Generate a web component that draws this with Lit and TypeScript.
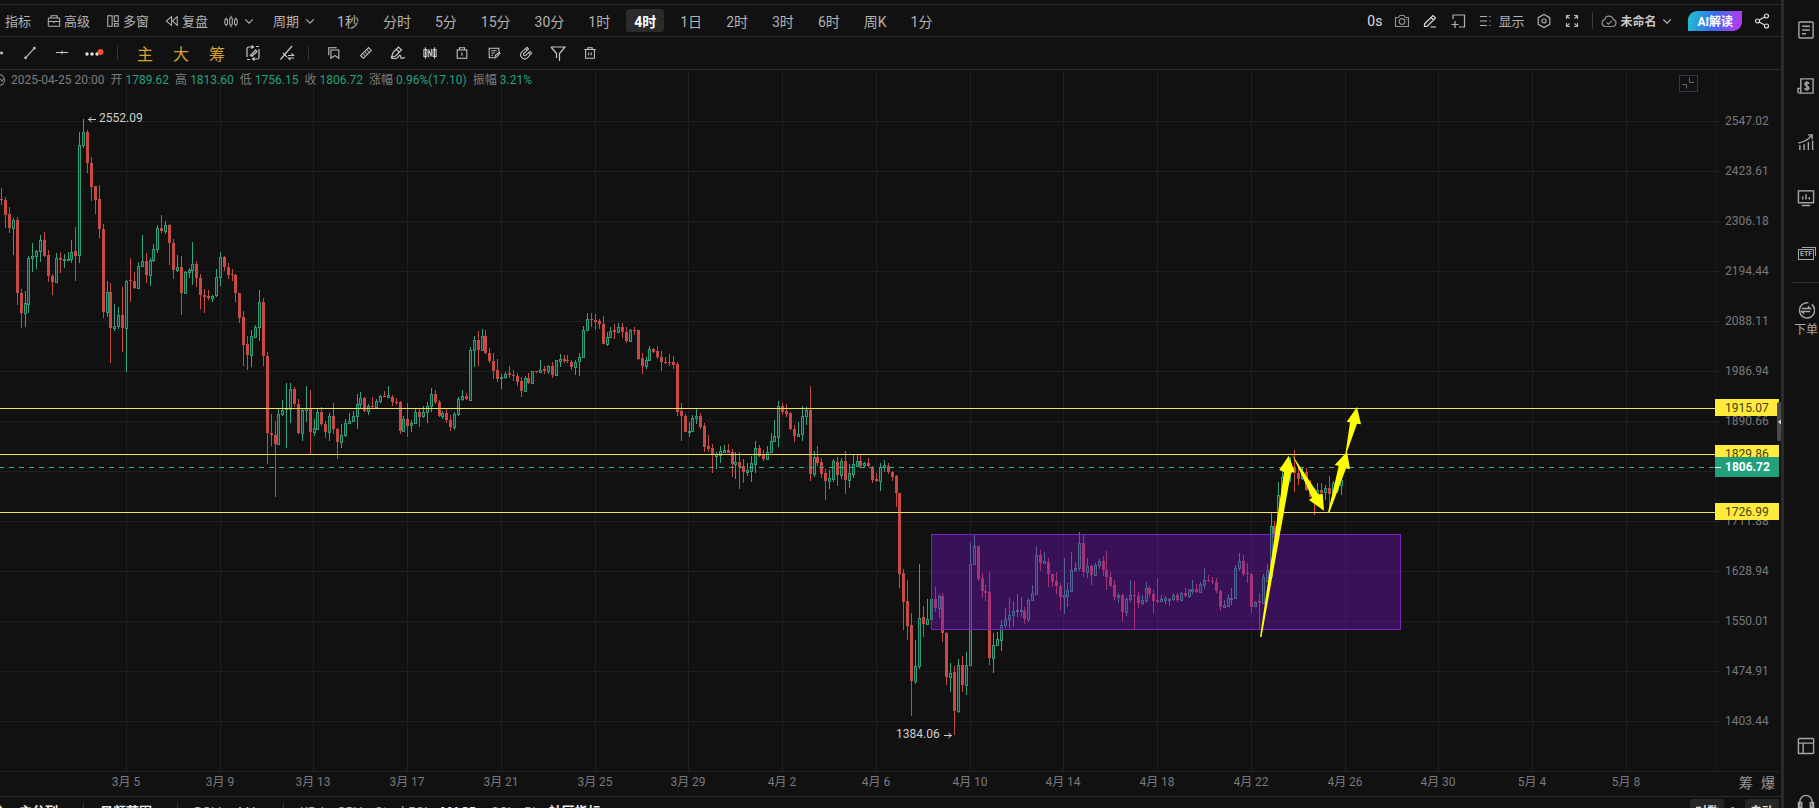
import { LitElement, html, svg, css, nothing } from "lit";
import { customElement, state } from "lit/decorators.js";
import { classMap } from "lit/directives/class-map.js";

/* ---------- candle series ----------
   Each entry: direction (r = down, g = up) then high, body top, body bottom, low.
   Readings are thirds of a pixel measured down from the block's base. */
const blocks: { base: number; rows: string }[] = [
  {
    base: 30,
    rows: `r265,297,301,315 r290,300,345,383 r321,343,383,398 g354,361,383,465 r352,361,580,614 r566,580,638,684 g572,610,638,680 g467,475,611,640
g429,467,475,515 g450,454,467,507 g404,420,454,487 r396,420,467,471 r451,465,529,545 r521,529,545,586 g458,475,545,549 r457,475,481,519
g463,477,481,503 g457,477,480,480 g421,455,478,489 r381,454,467,544 g97,136,466,489 g57,97,136,143 r90,97,190,219 r170,190,260,302
r258,259,299,341 r256,297,387,415 r373,387,635,653 g543,577,635,650 r549,577,683,789 g612,677,683,692 g620,646,677,688 r562,646,683,755
g541,544,683,815 r475,541,544,607 r515,542,563,567 g486,498,563,565 g405,484,498,500 r459,484,526,548 g473,481,526,559 g433,448,481,487
g375,384,448,459 r344,384,392,400 g363,376,392,401 r372,375,430,494 r417,430,509,538 g465,501,509,515 r468,502,578,644 g512,517,578,582
g504,510,517,534 g426,493,511,554 r484,492,535,560 r523,535,586,627 r568,585,592,638 r570,588,594,600 g584,588,594,607 g506,532,586,590
g457,472,532,559 r469,472,502,513 r489,500,525,537 r507,522,526,544 r523,526,580,606 r578,580,653,669 r632,651,734,798 r709,732,765,809
g689,709,765,800 g675,681,711,714 g570,606,681,722 r594,607,769,798 r755,769,998,1093 r942,998,1006,1039 r963,1006,1032,1190
g926,942,1032,1036 g901,930,942,948 g849,924,928,1045 g849,867,927,969 r861,867,913,920`,
  },
  {
    base: 200,
    rows: `r387,403,490,492 g415,421,490,514 g349,413,421,457 r360,413,487,551 g447,475,487,498 g417,427,477,479 r411,427,462,469 r452,461,487,504
g430,438,487,513 r400,438,478,492 r473,477,517,566 g463,496,517,535 g446,458,496,500 g430,452,459,461 g424,437,452,455 g373,402,437,478
g366,384,402,415 r382,385,422,427 g402,408,422,434 r381,408,412,418 g388,392,412,414 g376,379,393,398 r362,377,380,381 g348,376,380,382
r374,382,397,409 r385,396,398,404 r394,397,482,492 g438,448,482,484 r400,447,467,502 g451,459,466,486 g416,425,460,462 r418,425,440,470
g408,425,439,443 g397,409,425,458 g355,373,409,427 r361,373,396,403 r389,396,438,441 g424,430,438,447 r415,429,450,459 r434,449,470,482
g426,433,470,480 g381,387,433,437 g360,378,387,394 r370,378,387,389 g232,241,389,390 g199,211,241,291 r184,211,241,288 g178,199,241,243
r181,199,250,252 r234,250,274,278 r249,273,302,327 r267,300,326,336 g313,322,325,357 g306,311,322,326 r289,310,316,324 r299,315,318,333
r308,317,335,347 r322,334,363,380 g318,325,362,365 r308,325,338,341 g302,304,338,340 r302,304,307,309 g271,299,307,309 r289,298,303,311
g284,289,303,312 r276,289,314,323 g270,271,314,317 g253,268,272,292 r254,267,272,280 r255,269,274,280 r271,275,291,300 g269,276,290,314
g249,262,274,317 g167,181,262,265 g130,147,181,183 r130,147,151,172 r133,149,155,181 r146,153,163,178 r138,162,221,222 g186,202,221,228
g170,183,202,204 r162,180,187,206 g160,171,185,188 r160,171,187,205 r170,187,212,218 g178,180,212,213 r172,179,183,196 r179,181,266,271
r250,264,287,311 g262,271,287,297 g228,238,271,272 r234,238,246,250 r228,244,262,266 r243,260,276,303 r260,275,278,283 r252,276,279,288
r258,277,284,296 r277,283,425,438`,
  },
  {
    base: 230,
    rows: `r309,334,348,422 r343,347,395,397 g367,392,396,410 g345,354,392,394 g326,349,355,371 r340,349,380,386 r368,379,440,456 r406,439,446,455
r431,445,466,518 g456,463,467,506 g438,454,464,490 g435,451,455,458 r432,449,458,460 r448,457,491,530 g455,487,492,536 r455,487,501,568
r476,499,515,550 g488,510,515,527 g468,490,514,547 g422,443,491,520 r434,443,467,472 r451,465,476,482 g438,455,476,480 g400,424,457,458
g360,409,424,426 g303,319,410,441 r308,319,336,344 r311,334,341,352 r336,339,388,390 r375,388,407,427 g366,402,407,408 g318,347,402,423
g322,330,347,376 r258,330,521,542 g454,471,521,530 r437,471,488,497 r475,487,521,533 r508,520,542,600 g511,535,542,567 g476,484,536,545
r470,485,524,558 g475,484,524,537 r452,484,540,582 g492,520,540,565 g465,493,521,535 g465,484,497,500 r464,484,497,501 g486,490,496,503
r474,488,499,501 r498,500,541,548 r519,538,543,545 g490,500,542,574 g481,495,502,516 r490,497,517,521 r514,516,530,543 r525,527,580,621
r578,580,821,864 r808,820,905,991 r840,903,977,1021 r940,975,1144,1247 g1020,1099,1144,1152 g792,953,1098,1107 r918,952,973,1011
g896,957,973,975`,
  },
  {
    base: 380,
    rows: `g447,448,508,510 r411,448,475,486 g433,438,475,503 r430,438,550,576 r546,549,681,705 g640,668,681,726 r647,667,782,855 g627,646,782,789
r618,646,704,726 g607,644,704,735 g279,343,644,648 g255,289,343,345 r287,289,386,392 r368,385,422,443 r404,422,428,452 r366,427,624,645
g549,584,624,669 g547,568,586,588 g510,524,569,603 g474,507,524,534 g444,496,507,535 g454,483,496,532 g432,479,484,500 g440,479,482,500
r472,482,507,522 g445,450,507,516 g404,430,450,453 g288,315,433,434 r300,315,338,362 g307,332,338,341 r324,336,373,410 r372,373,395,410
r365,394,409,433 r398,408,442,480 g324,436,442,491 g398,421,437,471 g307,361,422,425 g337,353,361,366 g247,280,353,363 r254,280,367,382
g324,349,367,385 r346,349,374,405 g338,346,374,376 g327,334,346,356 r319,334,360,378 r304,359,380,421 r365,380,407,412 r391,406,440,450
g430,435,441,460 r433,436,487,512 g442,448,487,497 g390,436,448,457 r394,436,439,537 r425,438,460,473 g436,449,460,466 g397,415,449,460
r409,415,431,440 r420,431,453,489 r385,451,455,459 g434,448,453,456 g437,445,450,461 g444,447,450,467 g430,436,447,453 r428,436,451,457
g425,430,451,453 r415,430,437,440 g416,421,438,444 g391,417,422,432 r402,417,425,430 g395,403,425,426 g355,390,405,417 r375,390,394,396
r381,392,397,402 r384,396,424,430 r420,424,470,482 g450,466,470,470 g433,445,469,470 g414,443,447,466 g346,353,443,444 g308,334,353,362
r315,334,371,378 r338,370,373,400 r368,373,470,489 g454,457,469,472 r430,454,458,541 g372,381,458,461 g343,360,392,392 g189,229,382,385
r212,229,260,290`,
  },
  {
    base: 310,
    rows: `g306,345,440,450 g260,290,345,350 g240,262,290,300 g230,250,280,305 r210,262,280,335 r258,280,297,315 g262,275,295,300 r265,276,330,332
r300,328,350,352 r325,345,362,405 g309,330,362,365 r310,330,338,345 g314,324,337,359 r288,323,342,385 g304,310,338,345 g290,305,330,340
g270,300,315,345`,
  },
];

const STEP = 3.906;
const FIRST_X = 1.6;
const DAY_STEP = STEP * 24;
const FIRST_DAY_X = 126;

const paths = { upWick: "", upBody: "", downWick: "", downBody: "" };
let index = 0;
for (const block of blocks) {
  for (const row of block.rows.split(/\s+/)) {
    const [high, top, bottom, low] = row.slice(1).split(",").map((n) => Math.round(block.base + Number(n) / 3));
    const x = Math.floor(FIRST_X + STEP * index);
    const h = Math.max(1, bottom - top);
    if (row[0] === "r") {
      paths.downWick += `M${x + 0.5} ${high}V${low}`;
      paths.downBody += `M${x - 1} ${top}h3v${h}h-3z`;
    } else {
      paths.upWick += `M${x + 0.5} ${high}V${top}M${x + 0.5} ${top + h}V${low}`;
      paths.upBody += `M${x - 0.5} ${top + 0.5}h2v${h}h-2z`;
    }
    index++;
  }
}

const priceTicks = ["2547.02", "2423.61", "2306.18", "2194.44", "2088.11", "1986.94", "1890.66", "", "1711.88", "1628.94", "1550.01", "1474.91", "1403.44"];
const tickY = (i: number) => 51 + i * 50;
const levels = [
  { price: "1915.07", y: 338 },
  { price: "1829.86", y: 384 },
  { price: "1726.99", y: 442 },
];
const LAST_Y = 397;
const days = ["3月 5", "3月 9", "3月 13", "3月 17", "3月 21", "3月 25", "3月 29", "4月 2", "4月 6", "4月 10", "4月 14", "4月 18", "4月 22", "4月 26", "4月 30", "5月 4", "5月 8"];
const dayX = (i: number) => Math.round(FIRST_DAY_X + i * DAY_STEP);

const arrows = [
  "1260,567 1284,402 1279.3,400 1288.7,385.7 1294.7,402 1291,402.5 1261.5,567",
  "1292.3,385 1318.5,424.5 1322.7,423.7 1324,440.7 1309,430 1312,427.5",
  "1328,442.3 1338.7,396 1334.7,395 1347,381.7 1350,399 1346,398.5 1329.5,442.3",
  "1345.5,383.3 1350,352.5 1346.7,351.7 1357,337 1361,354.3 1357,353.7 1346.5,383.3",
];

/* ---------- icons ---------- */
const glyphs = {
  panel: svg`<path d="M2 2h11v12H2z"/><path d="M5 11V8M8 11V5M10.500 11V7"/>`,
  box: svg`<rect x="1.500" y="4.500" width="13" height="9.500" rx="1"/><path d="M4.500 4.500V2h7v2.500M1.500 8.500h13M8 8.500v2"/>`,
  windows: svg`<rect x="2" y="2" width="5" height="12"/><rect x="9.500" y="2" width="4.500" height="6.500"/><rect x="9.500" y="11" width="4.500" height="3"/>`,
  rewind: svg`<path d="M7.500 3v10L1.500 8zM14 3v10L8.500 8z"/>`,
  candles: svg`<rect x="1" y="6" width="3" height="6" rx="1"/><rect x="6.500" y="4.500" width="3" height="8" rx="1"/><rect x="12" y="6" width="3" height="6" rx="1"/><path d="M2.500 4v2M2.500 12v2M8 2v2.500M8 12.500V15M13.500 4v2M13.500 12v2"/>`,
  chevron: svg`<path d="M2 5.500L8 11.500 14 5.500" stroke-width="1.800"/>`,
  camera: svg`<path d="M1.500 4.500h3L6 2.500h4l1.500 2h3V13.500h-13z"/><circle cx="8" cy="8.500" r="2.800"/><path d="M12 6.500h1"/>`,
  pen: svg`<path d="M2.500 11L11 2.500l2.500 2.500L5 13.500H2.500zM9 4.500L11.500 7M8.500 14H14"/>`,
  addFrame: svg`<path d="M3 6V2h11.500v12H9M5 8v7M1.500 11.500h7"/>`,
  list: svg`<path d="M2 3.500h7M2 8h7M2 12.500h7"/><path d="M11.500 3.500h2M11.500 8h2M11.500 12.500h2" stroke-dasharray="1.200 .8"/>`,
  hex: svg`<path d="M8 1.500l5.800 3.200v6.600L8 14.500l-5.800-3.200V4.700z"/><circle cx="8" cy="8" r="2"/>`,
  expand: svg`<path d="M2.500 6V2.500H6M2.500 2.500l3 3M10 2.500h3.500V6M13.500 2.500l-3 3M2.500 10v3.500H6M2.500 13.500l3-3M10 13.500h3.500V10M13.500 13.500l-3-3"/>`,
  cloud: svg`<path d="M4.500 13.500a3.500 3.500 0 0 1-.7-6.900 4.400 4.400 0 0 1 8.500-.3 3.700 3.700 0 0 1-.4 7.200zM5.700 9.500l1.800 1.700 3.200-3.400"/>`,
  share: svg`<circle cx="3.500" cy="8" r="2"/><circle cx="12.500" cy="3" r="2"/><circle cx="12.500" cy="13" r="2"/><path d="M5.200 7l5.500-3M5.200 9l5.500 3"/>`,
  ray: svg`<path d="M0 8h14"/><circle cx="12" cy="8" r="1"/>`,
  segment: svg`<path d="M3 13.500L13 2.500"/><circle cx="3" cy="13.500" r="1"/><circle cx="13" cy="2.500" r="1"/>`,
  hline: svg`<path d="M1 7.500h14M8 5.500v4"/>`,
  loopEdit: svg`<path d="M2 12V3.500Q2 2 3.500 2H8M14 4v8.500Q14 14 12.500 14H8M6.500.500L8.500 2 6.500 3.500M9.500 12.500L7.500 14l2 1.500M5.500 10.500l5-5.500 1.500 1.500-5 4.700zM11 1.500h3M2 14.500h3"/>`,
  trendSwap: svg`<path d="M1.500 14.500L13 1M4 8l4 4M9 10.500h5.500l-2-2M15 13H9.500l2 2"/>`,
  bookmark: svg`<path d="M4.500 4.500h9V14l-4.500-3-4.500 3zM2 10.500V2h9"/>`,
  ruler: svg`<path d="M1.800 11L11 1.800 14 5 5 14zM5 9.500l1.500 1.500M7.200 7.200l1.500 1.500M9.500 5l1.500 1.500"/>`,
  brush: svg`<path d="M1.500 12.500l1.500-5L8.500 2l3 3-6 6zM6.500 4.500L9.500 7.500M1.500 13.500H6c2 0 3-4 4.300-3s-.3 3 1.200 3 1.700-1.500 3.500-.5"/>`,
  bars: svg`<rect x="1" y="4" width="3.500" height="8"/><rect x="11.500" y="4" width="3.500" height="8"/><path d="M2.800 1.500v13M13.200 1.500v13M6.500 13V4l3 8V3"/>`,
  lock: svg`<rect x="2.500" y="4.500" width="11" height="9.500"/><path d="M5 4.500V2h6v2.500M8 7.500v3.500"/>`,
  note: svg`<path d="M13.500 6V2.500h-11v11H8M5 5.500h6M5 8h4M5 10.500h2M9 13.500l.5-2.500L14 7l1 1.200-4 4.500z"/>`,
  magnet: svg`<path d="M9 1.500L3.200 7a4.600 4.600 0 0 0 6.500 6.500L14.500 8l-2-2-4.800 5a1.700 1.700 0 0 1-2.300-2.300L11 3.500zM7.500 3l2 2M11 7.500l2 2"/>`,
  funnel: svg`<path d="M1 2h14L9.500 8.500V16M1 2l5.500 6.500V13"/>`,
  trash: svg`<path d="M1.500 4h13M5.500 4V2h5v2M3 4v10h10V4M6.500 7.500v3M9.500 7.500v3"/>`,
};
type GlyphName = keyof typeof glyphs;
const icon = (name: GlyphName, cls = "") => html`<svg class="ico ${cls}" viewBox="0 0 16 16" aria-hidden="true">${glyphs[name]}</svg>`;

const railGlyphs = {
  doc: svg`<rect x="2" y="1" width="15" height="17" rx="1"/><path d="M5.500 5.500h8M5.500 9.500h8M5.500 13.500h4"/>`,
  money: svg`<path d="M4 2h13v15H2.500a1.500 1.500 0 0 1-1.500-1.500V12h3zM4 12v3.500a1.500 1.500 0 0 1-1.500 1.500"/><path d="M12.500 7.500c0-2.200-4.200-2.200-4.200 0s4.200 1.800 4.200 4-4.200 2.200-4.200 0M10.400 4.500v10"/>`,
  growth: svg`<path d="M3 18v-5M7.500 18v-6M12 18V9.500M16.500 18V8M1.500 10.500C8 9.500 12 7 15.500 2.500M11.500 2h4.500v4.500"/>`,
  monitor: svg`<rect x="1.500" y="2" width="16" height="12.500"/><path d="M6 11V8M9.500 11V5.500M13 11V8.500M5 17.500h9"/>`,
  swap: svg`<path d="M15.500 3.500A8 8 0 1 1 12 2M5 8h9l-2.500-2.500M14 11H5l2.500 2.500"/>`,
  layout: svg`<rect x="1.500" y="1.500" width="16" height="16" rx="1"/><path d="M1.500 6.500h16M6.500 6.500v11"/>`,
  headset: svg`<path d="M3 15.500V9a6.500 6.500 0 0 1 13 0v6.500M3 10H1.500v5H5v-5H3M16 10h1.500v5H14v-5h2"/>`,
};
const railIcon = (name: keyof typeof railGlyphs) => html`<svg class="rail-ico" viewBox="0 0 19 19" aria-hidden="true">${railGlyphs[name]}</svg>`;

const reset = css`
  button {
    all: unset;
    box-sizing: border-box;
    cursor: pointer;
    display: flex;
    align-items: center;
    white-space: nowrap;
  }
  .ico {
    width: 16px;
    height: 16px;
    flex: none;
    fill: none;
    stroke: currentColor;
    stroke-width: 1.2;
  }
`;

@customElement("top-bar")
class TopBar extends LitElement {
  @state() private period = "4时";

  static styles = [
    reset,
    css`
      :host { display: flex; align-items: center; justify-content: space-between; height: 31px; border-top: 1px solid #2c2c2c; border-bottom: 1px solid #2c2c2c; font-size: 14px; color: #b2b2b2; overflow: hidden; }
      .group { display: flex; align-items: center; }
      .tools { gap: 16px; margin-left: -12px; font-size: 13px; }
      .tools button { gap: 3px; }
      .tools .ico { width: 14px; height: 14px; }
      .tools .menu { padding-right: 3px; }
      .ico.small { width: 10px; height: 10px; margin-left: 3px; }
      .tools .ico.small { width: 10px; height: 10px; }
      .periods { gap: 8px; margin-left: 11px; }
      .period { padding: 0 8px; height: 23px; border-radius: 3px; }
      .active { background: #2b2b2b; color: #fff; font-weight: 700; }
      .right { gap: 12px; padding-right: 11px; }
      .show { gap: 4px; font-size: 13px; }
      .dim { color: #8f8f8f; }
      .bright { color: #dedede; }
      .cloud { gap: 3px; padding-left: 8px; border-left: 1px solid #3a3a3a; font-size: 12px; font-weight: 700; color: #c8c8c8; }
      .ai { height: 20px; padding: 0 9px; font-size: 12px; font-weight: 700; color: #fff; border-radius: 9px 0 9px 0; background: linear-gradient(105deg, #20c4cc, #3a6cf0 48%, #c832f5); margin-left: 4px; }
    `,
  ];

  render() {
    const periods = ["1秒", "分时", "5分", "15分", "30分", "1时", "4时", "1日", "2时", "3时", "6时", "周K", "1分"];
    return html`
      <div class="group">
        <div class="group tools">
          <button>${icon("panel")}指标</button>
          <button>${icon("box")}高级</button>
          <button>${icon("windows")}多窗</button>
          <button>${icon("rewind")}复盘</button>
          <button class="menu" aria-label="图表类型">${icon("candles")}${icon("chevron", "small")}</button>
          <button class="menu">周期${icon("chevron", "small")}</button>
        </div>
        <div class="group periods">
          ${periods.map(
            (p) => html`<button class=${classMap({ period: true, active: p === this.period })} aria-pressed=${p === this.period} @click=${() => (this.period = p)}>${p}</button>`
          )}
        </div>
      </div>
      <div class="group right">
        <button class="bright">0s</button>
        <button class="dim" aria-label="截图">${icon("camera")}</button>
        <button class="bright" aria-label="画线">${icon("pen")}</button>
        <button aria-label="添加">${icon("addFrame")}</button>
        <button class="show">${icon("list")}显示</button>
        <button aria-label="设置">${icon("hex")}</button>
        <button aria-label="全屏">${icon("expand")}</button>
        <button class="cloud">${icon("cloud", "dim")}未命名${icon("chevron", "small")}</button>
        <button class="ai">AI解读</button>
        <button class="bright" aria-label="分享">${icon("share")}</button>
      </div>
    `;
  }
}

@customElement("draw-bar")
class DrawBar extends LitElement {
  static styles = [
    reset,
    css`
      :host { display: flex; align-items: center; height: 32px; border-bottom: 1px solid #2c2c2c; color: #c6c6c6; overflow: hidden; }
      .lead { margin-left: -18px; padding-right: 2px; }
      .cell { width: 32px; height: 28px; justify-content: center; }
      .wide { width: 36px; }
      .gold { width: 36px; font-size: 16px; color: #d3a52a; }
      .group { display: flex; }
      .sep { width: 1px; height: 14px; background: #333; margin: 0 9px 0 5px; }
      .ico { width: 14px; height: 14px; }
      .wide .ico, .big .ico { width: 16px; height: 16px; }
      .more { width: 20px; height: 10px; }
    `,
  ];

  render() {
    const cell = (name: GlyphName, label: string, cls = "") => html`<button class="cell ${cls}" aria-label=${label}>${icon(name)}</button>`;
    return html`
      <div class="group lead">
        ${cell("ray", "射线")}${cell("segment", "线段")}${cell("hline", "水平线")}
        <button class="cell" aria-label="更多">
          <svg class="more" viewBox="0 0 20 10"><g fill="#e6e6e6"><circle cx="3" cy="6" r="1.700" /><circle cx="8" cy="6" r="1.700" /><circle cx="13" cy="6" r="1.700" /></g><circle cx="16.500" cy="4" r="3" fill="#f0562b" /></svg>
        </button>
      </div>
      <span class="sep"></span>
      <div class="group">
        <button class="cell gold">主</button><button class="cell gold">大</button><button class="cell gold">筹</button>
        ${cell("loopEdit", "循环画线", "wide")}${cell("trendSwap", "趋势切换", "big")}
      </div>
      <span class="sep"></span>
      <div class="group">
        ${cell("bookmark", "收藏")}${cell("ruler", "测量")}${cell("brush", "画笔", "big")}${cell("bars", "形态")}${cell("lock", "锁定")}${cell("note", "备注")}${cell("magnet", "磁吸")}${cell("funnel", "筛选", "big")}${cell("trash", "删除")}
      </div>
    `;
  }
}

@customElement("price-chart")
class PriceChart extends LitElement {
  static styles = [
    reset,
    css`
      :host { display: grid; grid-template: minmax(0, 1fr) 25px / minmax(0, 1fr) 66px; position: relative; min-height: 0; overflow: hidden; font-size: 12px; }
      svg { display: block; width: 100%; height: 100%; overflow: hidden; }
      .grid { stroke: #1f1f1f; stroke-width: 1; shape-rendering: crispEdges; }
      .edge { stroke: #1c1c1c; }
      .crisp { shape-rendering: crispEdges; fill: none; }
      .up { stroke: #36a37f; }
      .up-body { stroke: #2f9c78; fill: #173a30; }
      .down { stroke: #c84a45; }
      .down-body { fill: #c84a45; }
      .zone { fill: rgba(112, 19, 184, 0.42); stroke: #7a22c4; shape-rendering: crispEdges; }
      .level { stroke: #f3e25a; }
      .last { stroke: #2bb38a; stroke-dasharray: 5 5; stroke-dashoffset: 1; }
      .arrow { fill: #ff0; }
      .note { fill: #cfcfcf; }
      .note-line { stroke: #cfcfcf; fill: none; }
      .tick { fill: #77797f; }
      .tag { fill: #ffeb3b; }
      .tag-text { fill: #443f12; }
      .last-tag { fill: #22a07c; }
      .last-text { fill: #fff; font-weight: 700; }
      .last-dash { stroke: #fff; }
      .summary { position: absolute; left: -4px; top: 2px; display: flex; align-items: center; gap: 6px; height: 16px; line-height: 16px; color: #7d7d7d; white-space: nowrap; margin: 0; }
      .summary .ico { width: 10px; height: 14px; margin-right: -1px; }
      .pair { display: flex; align-items: baseline; gap: 3px; height: 16px; }
      .value { color: #26a17b; }
      .corner { position: absolute; right: 83px; top: 5px; width: 19px; height: 17px; border: 1px solid #34344c; color: #666; }
      .corner .ico { width: 17px; height: 15px; stroke-width: 1; }
      .handle { position: absolute; right: -2px; top: 332px; width: 6px; height: 39px; background: #4a4a4a; border-radius: 2px 0 0 2px; }
      .handle svg { width: 6px; height: 10px; fill: #ddd; }
      .dates { border-top: 1px solid #1f1f1f; min-width: 0; }
      .modes { border-top: 1px solid #1f1f1f; display: flex; justify-content: flex-end; gap: 8px; padding: 0 6px 2px 0; font-size: 14px; line-height: 20px; color: #9a9a9a; }
    `,
  ];

  render() {
    const info: [string, string][] = [["开", "1789.62"], ["高", "1813.60"], ["低", "1756.15"], ["收", "1806.72"], ["涨幅", "0.96%(17.10)"], ["振幅", "3.21%"]];
    return html`
      <svg role="img" aria-label="K线图">
        <g class="grid">
          ${priceTicks.map((_, i) => svg`<line x1="0" x2="100%" y1=${tickY(i) + 0.5} y2=${tickY(i) + 0.5} />`)}
          ${days.map((_, i) => svg`<line x1=${dayX(i) + 0.5} x2=${dayX(i) + 0.5} y1="2" y2="100%" />`)}
        </g>
        <path class="crisp up" d=${paths.upWick} />
        <path class="crisp up-body" d=${paths.upBody} />
        <path class="crisp down" d=${paths.downWick} />
        <path class="crisp down-body" d=${paths.downBody} />
        <rect class="zone" x="931.500" y="464.500" width="469" height="95" />
        ${levels.map((l) => svg`<line class="crisp level" x1="0" x2="100%" y1=${l.y + 0.5} y2=${l.y + 0.5} />`)}
        <line class="crisp last" x1="0" x2="100%" y1=${LAST_Y + 0.5} y2=${LAST_Y + 0.5} />
        ${arrows.map((a) => svg`<polygon class="arrow" transform="translate(0 -70)" points=${a.split(" ").map((p) => p.split(",").map(Number)).map(([x, y]) => `${x},${y + 70}`).join(" ")} />`)}
        <text class="note" x="99" y="52">2552.09</text>
        <path class="note-line" d="M96 49.500H88.500M91.500 47l-3 2.500 3 2.500" />
        <text class="note" x="896" y="668">1384.06</text>
        <path class="note-line" d="M944 665.500h7.500M948.500 663l3 2.500-3 2.500" />
      </svg>
      <svg aria-label="价格轴">
        <line class="edge" x1=".5" x2=".5" y1="0" y2="100%" />
        ${priceTicks.map((p, i) => svg`<line class="edge" x1="0" x2="5" y1=${tickY(i) + 0.5} y2=${tickY(i) + 0.5} />${p ? svg`<text class="tick" x="10" y=${tickY(i) + 4}>${p}</text>` : nothing}`)}
        ${levels.map((l) => svg`<rect class="tag" x="0" y=${l.y - 9} width="64" height="17" /><text class="tag-text" x="10" y=${l.y + 4}>${l.price}</text>`)}
        <rect class="last-tag" x="0" y=${LAST_Y - 10} width="64" height="20" />
        <line class="last-dash" x1="0" x2="6" y1=${LAST_Y + 0.5} y2=${LAST_Y + 0.5} />
        <text class="last-text" x="10" y=${LAST_Y + 4}>1806.72</text>
      </svg>
      <div class="dates">
        <svg aria-label="日期轴">${days.map((d, i) => svg`<text class="tick" x=${dayX(i)} y="14" text-anchor="middle">${d}</text>`)}</svg>
      </div>
      <div class="modes"><button>筹</button><button>爆</button></div>
      <p class="summary">
        <svg class="ico" viewBox="0 0 10 14"><circle cx="3" cy="7" r="5.500" /><path d="M4 5.500L6 8l2-2.500" /></svg>
        <span>2025-04-25 20:00</span>
        ${info.map(([k, v]) => html`<span class="pair"><span>${k}</span><span class="value">${v}</span></span>`)}
      </p>
      <button class="corner" aria-label="收起">
        <svg class="ico" viewBox="0 0 17 15"><path d="M9.500 1.500v5H14M2.500 8.500h4v4" /></svg>
      </button>
      <button class="handle" aria-label="展开侧栏"><svg viewBox="0 0 6 10"><path d="M6 1v8L1 5z" /></svg></button>
    `;
  }
}

@customElement("indicator-bar")
class IndicatorBar extends LitElement {
  static styles = [
    reset,
    css`
      :host { display: flex; justify-content: space-between; align-items: flex-start; height: 12px; border-top: 1px solid #2c2c2c; overflow: hidden; font-size: 13px; line-height: 18px; color: #a8a8a8; box-sizing: border-box; }
      .row { display: flex; align-items: flex-start; padding-top: 6px; }
      .left { margin-left: -20px; gap: 13px; }
      .strong { color: #e8e8e8; font-weight: 700; }
      .sep { width: 1px; height: 14px; background: #333; margin: 0 3px 0 12px; }
      .right { gap: 6px; padding: 2px 2px 0 0; font-size: 12px; }
      .box { background: #262626; border-radius: 2px; padding: 4px 5px 0; color: #ddd; font-weight: 700; }
      .plain { padding-top: 4px; }
    `,
  ];

  render() {
    const sep = html`<span class="sep"></span>`;
    return html`
      <div class="row left">
        <button class="strong">持仓</button><button class="strong">主分列</button>${sep}<button class="strong">日频范围</button>${sep}
        <button>BOLL</button><button>MA</button>${sep}<button>KDJ</button><button>OBV</button><button>StochRSI</button>
        <button class="strong">MACD</button><button>CCI</button><button>BI</button><button class="strong">社区指标</button>
      </div>
      <div class="row right"><button class="box">对数</button><button class="plain">%</button><button class="box">自动</button></div>
    `;
  }
}

@customElement("side-rail")
class SideRail extends LitElement {
  static styles = [
    reset,
    css`
      :host { display: block; overflow: hidden; border-left: 3px solid #2a2a2a; }
      .rail { display: flex; flex-direction: column; width: 44px; height: 100%; padding-top: 2px; box-sizing: border-box; color: #a6a6a6; }
      .item { height: 56px; flex: none; justify-content: center; }
      .rule { height: 1px; flex: none; background: #2e2e2e; margin-left: 7px; }
      .order { flex: none; flex-direction: column; gap: 2px; padding-top: 18px; font-size: 12px; line-height: 18px; }
      .rail-ico { width: 18px; height: 18px; fill: none; stroke: currentColor; stroke-width: 1.5; }
      .etf { font-size: 7px; font-weight: 700; line-height: 9px; border: 1px solid; box-shadow: 2px -2px 0 -1px #111, 3px -3px 0 -1px #a6a6a6; padding: 0 1px; }
      .bottom { margin-top: auto; margin-bottom: -22px; flex: none; display: flex; flex-direction: column; }
    `,
  ];

  render() {
    return html`
      <nav class="rail">
        <button class="item" aria-label="资讯">${railIcon("doc")}</button>
        <button class="item" aria-label="资金">${railIcon("money")}</button>
        <button class="item" aria-label="走势">${railIcon("growth")}</button>
        <button class="item" aria-label="行情">${railIcon("monitor")}</button>
        <button class="item"><span class="etf">ETF</span></button>
        <span class="rule"></span>
        <button class="order">${railIcon("swap")}<span>下单</span></button>
        <div class="bottom">
          <button class="item" aria-label="布局">${railIcon("layout")}</button>
          <button class="item" aria-label="客服">${railIcon("headset")}</button>
        </div>
      </nav>
    `;
  }
}

@customElement("app-root")
class AppRoot extends LitElement {
  static styles = css`
    :host { display: grid; grid-template-columns: minmax(0, 1fr) 38px; grid-template-rows: minmax(0, 1fr); height: 100vh; overflow: hidden; background: #111; color: #b2b2b2; font-family: Roboto, "Noto Sans CJK SC", sans-serif; }
    .main { display: flex; flex-direction: column; min-width: 0; min-height: 0; padding-top: 4px; }
    price-chart { flex: 1; }
  `;

  render() {
    return html`
      <main class="main">
        <top-bar></top-bar>
        <draw-bar></draw-bar>
        <price-chart></price-chart>
        <indicator-bar></indicator-bar>
      </main>
      <side-rail></side-rail>
    `;
  }
}
